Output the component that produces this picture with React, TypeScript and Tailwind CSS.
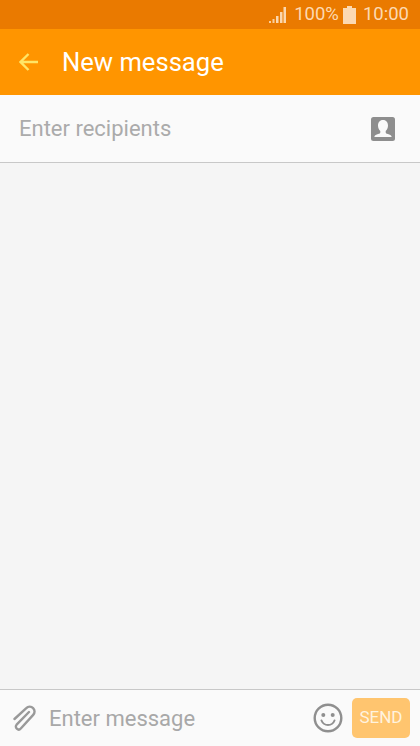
import React from "react";

function SignalIcon() {
  return (
    <svg width="17" height="18" viewBox="0 0 17 18" fill="#fbd7ae">
      <rect x="0" y="15" width="2" height="2" opacity="0.9" />
      <rect x="3.5" y="13" width="2" height="4" opacity="0.9" />
      <rect x="7" y="10" width="2.5" height="7" />
      <rect x="11" y="6" width="2.5" height="11" />
      <rect x="14.5" y="1" width="2.5" height="16" />
    </svg>
  );
}

function BatteryIcon() {
  return (
    <svg width="13" height="18" viewBox="0 0 13 18" fill="#fcd9b2">
      <path d="M4 0h5v2h4v16H0V2h4z" />
    </svg>
  );
}

function ContactIcon() {
  return (
    <svg width="24" height="24" viewBox="0 0 24 24">
      <rect width="24" height="24" rx="2.5" fill="#8e8e8e" />
      <path
        d="M12 3c-3.400 0-5 2.500-5 5.500 0 2.400 1 4.300 2.300 5.400v1.300c0 1-.8 1.500-2.200 1.900-1.800.6-3.400 1.100-3.800 3h17.400c-.4-1.900-2-2.400-3.800-3-1.400-.4-2.200-.9-2.200-1.900v-1.300c1.300-1.100 2.300-3 2.300-5.400 0-3-1.600-5.500-5-5.500z"
        fill="#fafafa"
      />
    </svg>
  );
}

function ClipIcon() {
  return (
    <svg width="26" height="27" viewBox="0 0 26 27" fill="none" stroke="#999999" strokeWidth="2.4" strokeLinecap="round" strokeLinejoin="round">
      <path d="M2.500 14 14.300 3.200a4.800 4.800 0 0 1 6.900 6.700L8.800 23.500a2.800 2.800 0 0 1-4.200-3.800L17 7" />
    </svg>
  );
}

function SmileIcon() {
  return (
    <svg width="30" height="30" viewBox="0 0 30 30" fill="none">
      <circle cx="15" cy="15" r="13.3" stroke="#8f8f8f" strokeWidth="2.4" />
      <circle cx="10.3" cy="12" r="2" fill="#8f8f8f" />
      <circle cx="19.7" cy="12" r="2" fill="#8f8f8f" />
      <path d="M8.500 17.500c1.200 3 3.500 4.500 6.500 4.500s5.300-1.500 6.500-4.500" stroke="#8f8f8f" strokeWidth="2" strokeLinecap="round" />
    </svg>
  );
}

export default function App() {
  return (
    <div className="flex flex-col w-[420px] h-[746px] overflow-hidden bg-[#f5f5f5] font-['Roboto',sans-serif]">
      <div className="flex items-center justify-end h-[29px] shrink-0 bg-[#ea7a00] pr-[11px] text-[#fcd9b2] text-[18.5px]">
        <SignalIcon />
        <span className="ml-[8px]">100%</span>
        <span className="ml-[4px]">
          <BatteryIcon />
        </span>
        <span className="ml-[7px]">10:00</span>
      </div>

      <header className="flex items-center h-[66px] shrink-0 bg-[#ff9500] text-white">
        <svg className="ml-[19px]" width="19" height="18" viewBox="0 0 19 18" fill="none" stroke="#ffe566" strokeWidth="2.4">
          <path d="M19 9H2M9.500 1 1.500 9l8 8" />
        </svg>
        <h1 className="ml-[24px] mt-[2px] text-[25.6px] leading-none">New message</h1>
      </header>

      <div className="flex items-center justify-between h-[68px] shrink-0 bg-[#fafafa] border-b border-[#c8c8c8] pl-[19px] pr-[25px]">
        <span className="text-[22px] text-[#ababab]">Enter recipients</span>
        <ContactIcon />
      </div>

      <div className="flex-1" />

      <div className="flex items-center h-[57px] shrink-0 bg-[#fafafa] border-t border-[#c8c8c8] pl-[12px] pr-[10px]">
        <ClipIcon />
        <span className="ml-[11px] flex-1 text-[22px] text-[#a8a8a8]">Enter message</span>
        <SmileIcon />
        <button className="ml-[9px] w-[58px] h-[40px] rounded-[5px] bg-[#ffc56f] text-[#fff3df] text-[17px]">SEND</button>
      </div>
    </div>
  );
}
